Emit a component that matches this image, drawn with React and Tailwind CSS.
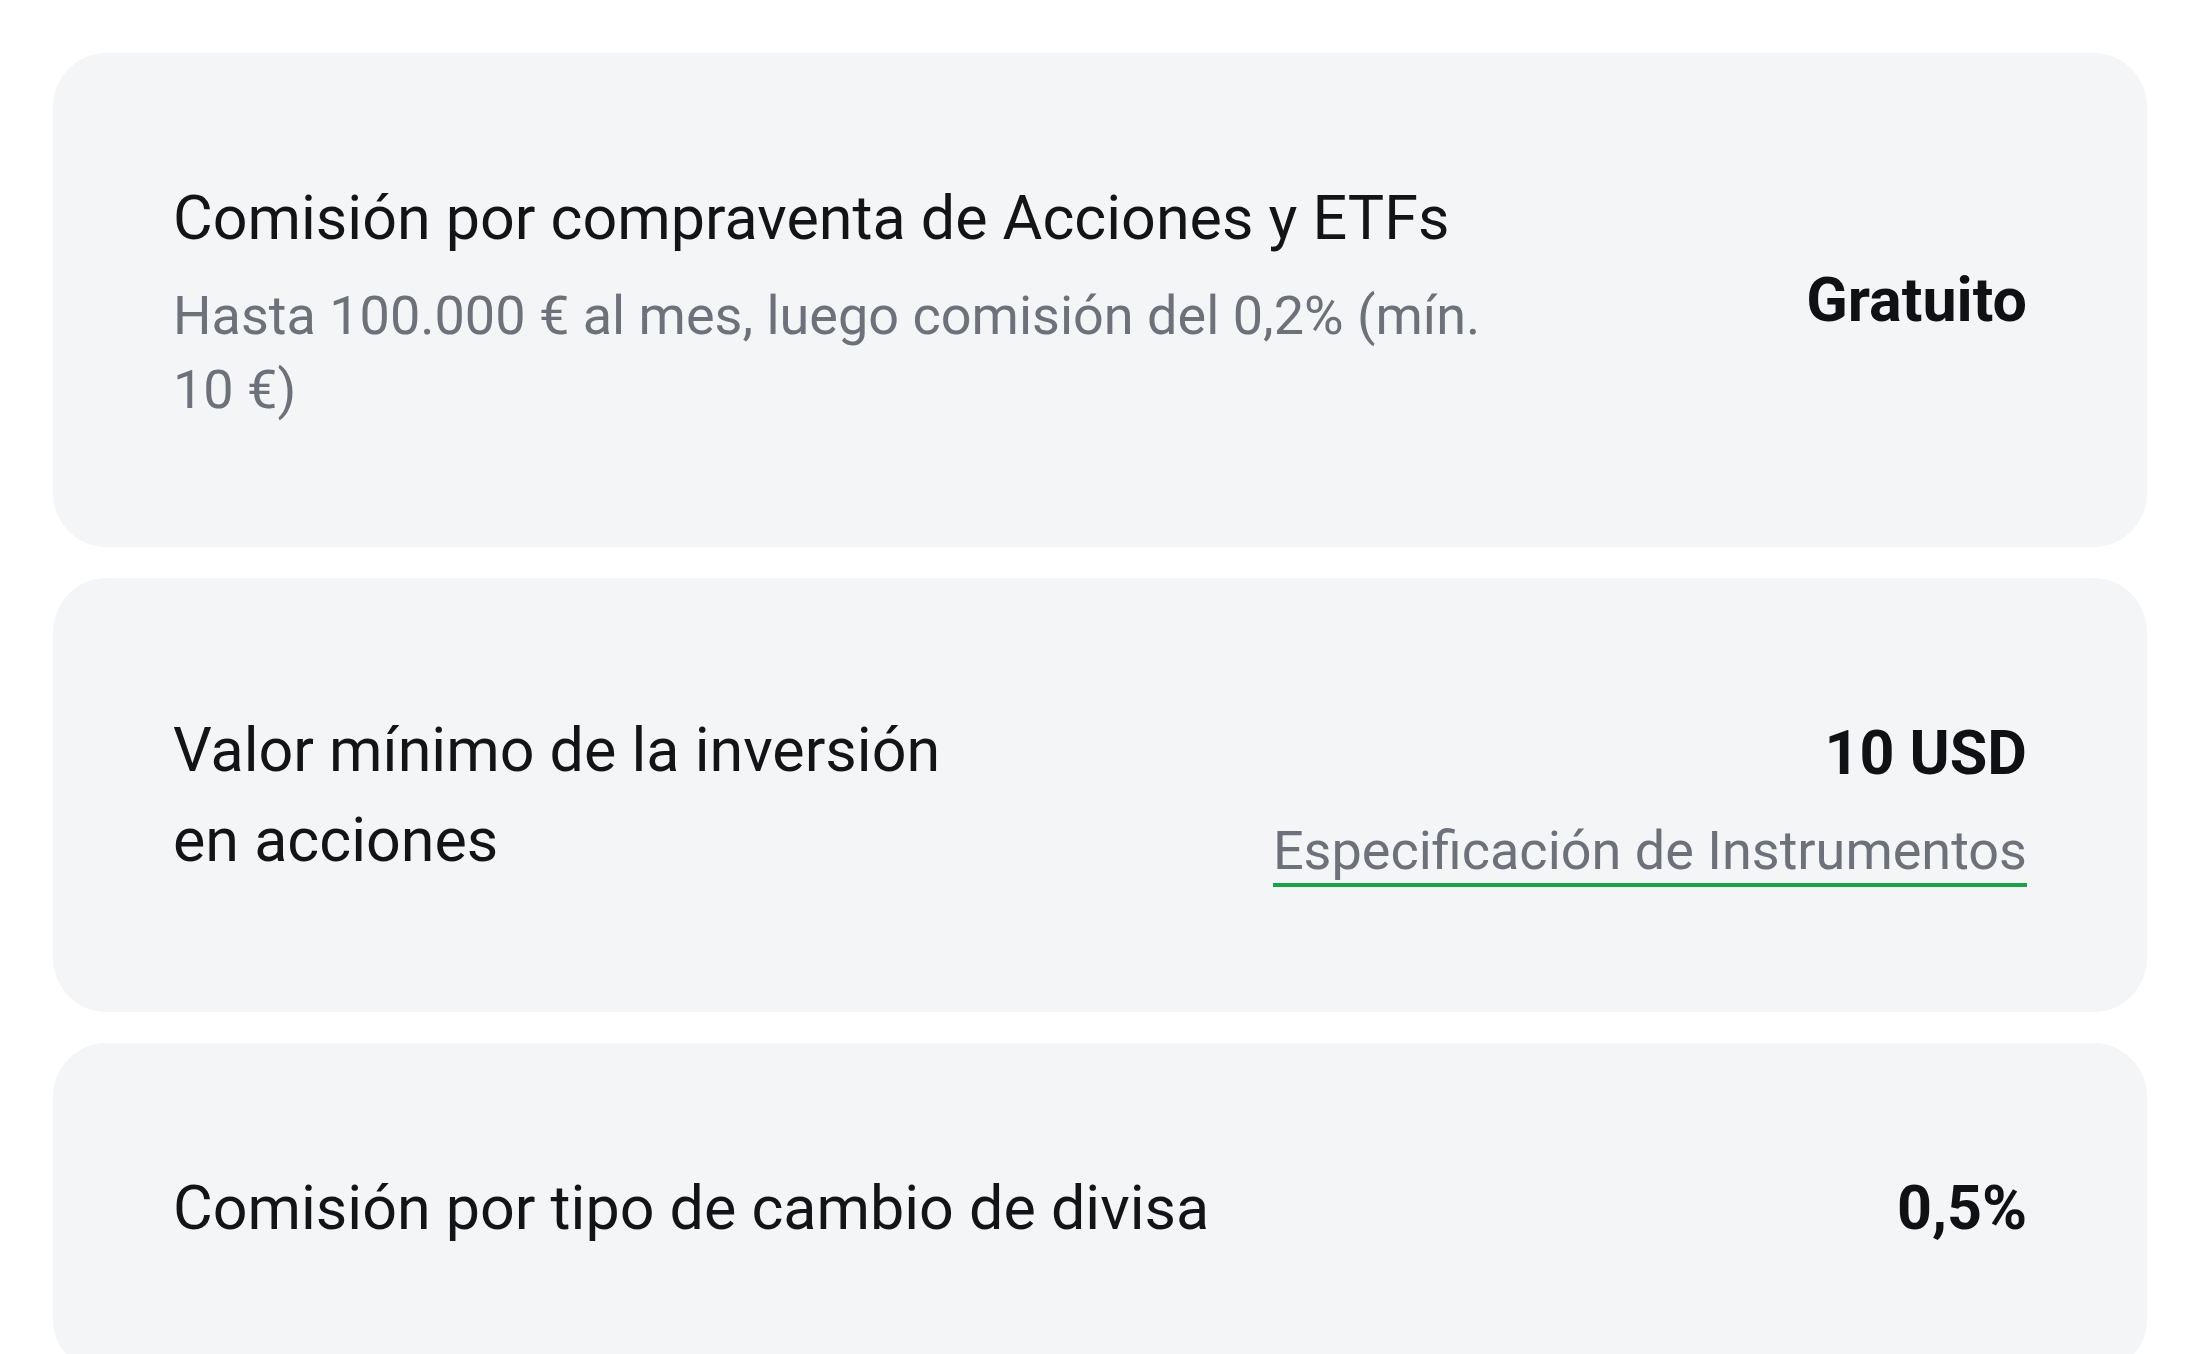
const fees = [
    {
        title: 'Comisión por compraventa de Acciones y ETFs',
        note: 'Hasta 100.000 € al mes, luego comisión del 0,2% (mín. 10 €)',
        value: 'Gratuito',
    },
    {
        title: 'Valor mínimo de la inversión en acciones',
        value: '10 USD',
        link: 'Especificación de Instrumentos',
    },
    {
        title: 'Comisión por tipo de cambio de divisa',
        value: '0,5%',
    },
];

function FeeCard({ fee }) {
    return (
        <div
            className={`flex items-center justify-between gap-[300px] rounded-[54px] bg-[#f4f5f7] px-[120px] ${fee.link ? 'py-[125px]' : 'py-[120px]'}`}
        >
            {/* Left: label + optional note */}
            <div className="min-w-0 flex-1">
                <div className="text-[61px] leading-[90px] font-normal text-[#121417]">{fee.title}</div>
                {fee.note && (
                    <p className="mt-[16px] text-[54px] leading-[74px] text-[#6c717a]">{fee.note}</p>
                )}
            </div>

            {/* Right: value + optional link */}
            <div className="flex shrink-0 flex-col items-end">
                <div className={`text-[61px] font-bold text-[#0f1114] ${fee.link ? 'leading-[100px]' : 'leading-[90px]'}`}>
                    {fee.value}
                </div>
                {fee.link && (
                    <a
                        href="#"
                        className="mt-[16px] border-b-4 border-[#1aa34a] text-[54px] leading-[64px] text-[#6c717a]"
                    >
                        {fee.link}
                    </a>
                )}
            </div>
        </div>
    );
}

export default function App() {
    return (
        <div className="h-[1354px] overflow-hidden bg-white px-[53px] pt-[53px] font-['Roboto','Noto_Sans',sans-serif]">
            <div className="flex flex-col gap-[31px]">
                {fees.map((fee, i) => (
                    <FeeCard key={i} fee={fee} />
                ))}
            </div>
        </div>
    );
}
